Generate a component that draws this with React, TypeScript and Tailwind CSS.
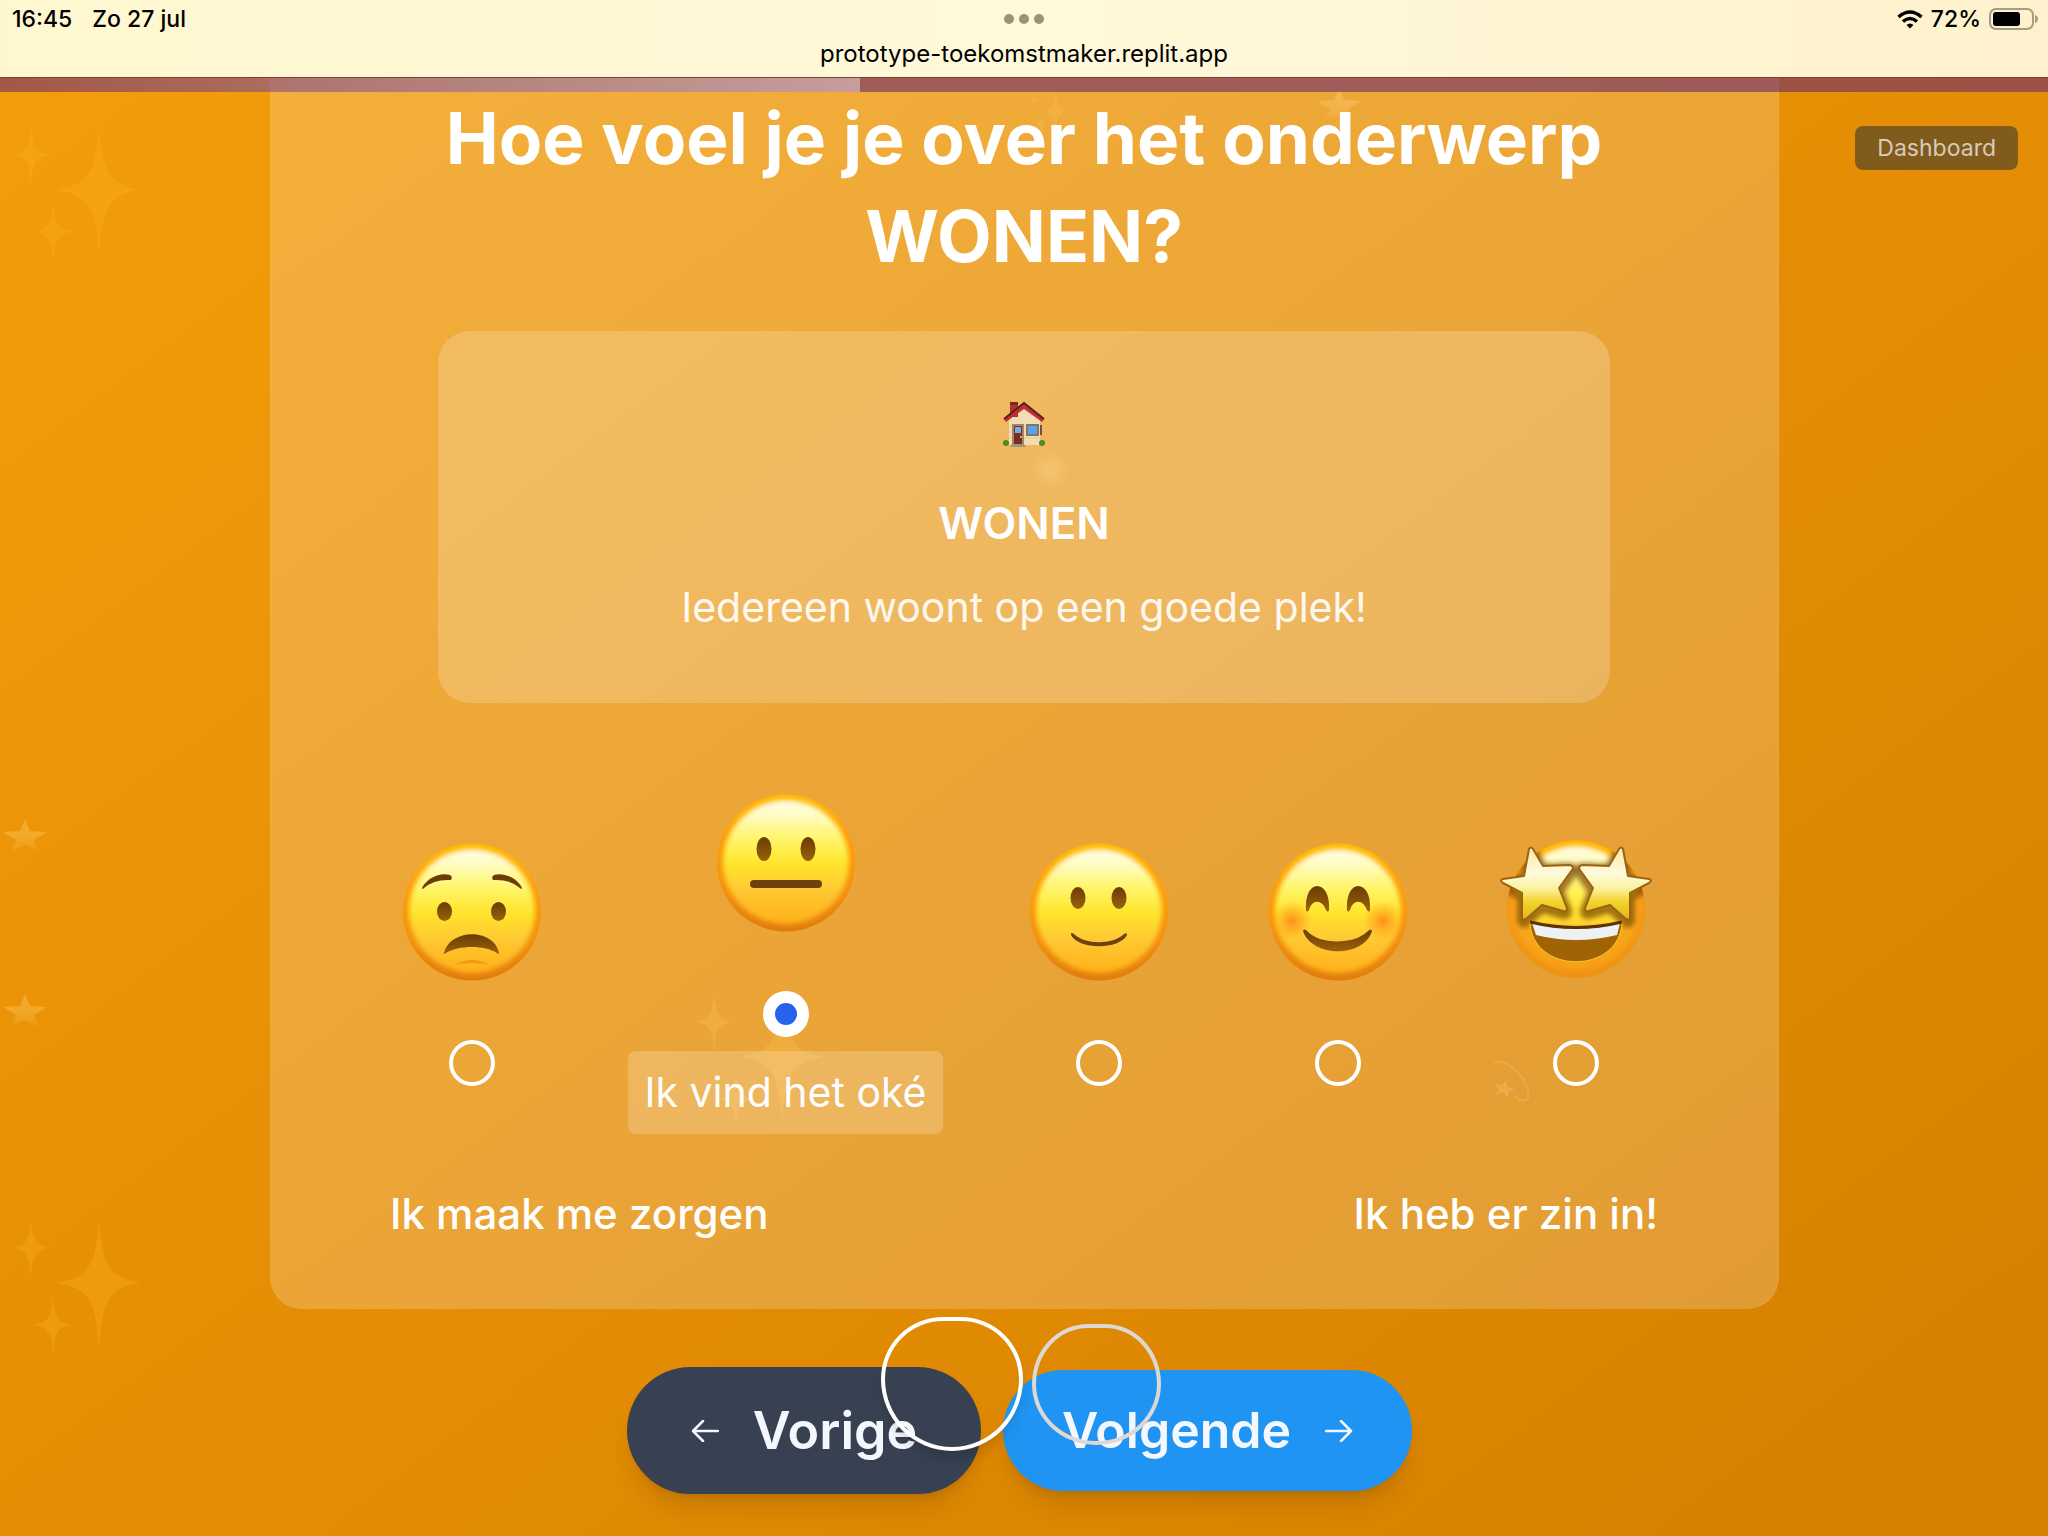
import React from "react";

const INK = "#70410a";

function FaceDefs() {
  return (
    <svg width="0" height="0" className="absolute" aria-hidden="true">
      <defs>
        <linearGradient id="face" x1="0" y1="0" x2="0" y2="1">
          <stop offset="0" stopColor="#fffde6" />
          <stop offset="0.12" stopColor="#fffcc4" />
          <stop offset="0.3" stopColor="#fff670" />
          <stop offset="0.5" stopColor="#ffe62f" />
          <stop offset="0.75" stopColor="#ffc630" />
          <stop offset="1" stopColor="#ffb11a" />
        </linearGradient>
        <linearGradient id="rim" x1="0" y1="0" x2="0" y2="1">
          <stop offset="0" stopColor="#ffb900" />
          <stop offset="0.3" stopColor="#ff9d05" />
          <stop offset="0.7" stopColor="#f4900f" />
          <stop offset="1" stopColor="#e07c0c" />
        </linearGradient>
        <filter id="soft" x="-10%" y="-10%" width="120%" height="120%">
          <feGaussianBlur stdDeviation="2.500" />
        </filter>
        <clipPath id="disc">
          <ellipse cx="82" cy="77" rx="69" ry="68.500" />
        </clipPath>
        <linearGradient id="ink" x1="0" y1="0" x2="0" y2="1">
          <stop offset="0" stopColor="#6b3c05" />
          <stop offset="1" stopColor="#9a620a" />
        </linearGradient>
        <radialGradient id="blush">
          <stop offset="0" stopColor="#ff8f1c" />
          <stop offset="1" stopColor="#ffa01c" stopOpacity="0" />
        </radialGradient>
        <linearGradient id="star" x1="0" y1="0" x2="0" y2="1">
          <stop offset="0" stopColor="#fde9a8" />
          <stop offset="0.35" stopColor="#fffadc" />
          <stop offset="0.55" stopColor="#fbf3a8" />
          <stop offset="0.75" stopColor="#f3d42c" />
          <stop offset="1" stopColor="#e6b41c" />
        </linearGradient>
      </defs>
    </svg>
  );
}

function Face({ label, children, cy = 80 }: { label: string; children: React.ReactNode; cy?: number }) {
  return (
    <svg viewBox="0 0 164 160" className="h-[160px] w-[164px]" role="img" aria-label={label}>
      <ellipse cx="82" cy={cy} rx="69" ry="68.500" fill="url(#rim)" />
      <ellipse cx="82" cy={cy - 1} rx="63" ry="62" fill="url(#face)" filter="url(#soft)" />
      {children}
    </svg>
  );
}

const Worried = () => (
  <Face label="Ik maak me zorgen">
    <ellipse cx="54.500" cy="79.500" rx="7.500" ry="9.500" fill="url(#ink)" />
    <ellipse cx="108.500" cy="79.500" rx="7.500" ry="9.500" fill="url(#ink)" />
    <path d="M32 56 C37 46 50 40 60 43 Q63 45 61 48 Q44 47 34 56 Q32 58 32 56Z" fill="#6b3c05" />
    <path d="M132 56 C127 46 114 40 104 43 Q101 45 103 48 Q120 47 130 56 Q132 58 132 56Z" fill="#6b3c05" />
    <path d="M54 121 C60 96 104 96 109 121 Q110 123 107 121 C95 113 69 113 56 121 Q53 123 54 121Z" fill="url(#ink)" />
    <path d="M64 133 Q82 123 100 133 Q82 129 64 133Z" fill="#f08c10" opacity="0.7" />
  </Face>
);

const Neutral = () => (
  <Face label="Ik vind het oké">
    <ellipse cx="60" cy="66" rx="7.500" ry="12" fill="url(#ink)" />
    <ellipse cx="104" cy="66" rx="7.500" ry="12" fill="url(#ink)" />
    <rect x="46" y="97" width="72" height="8" rx="4" fill={INK} />
  </Face>
);

const Smile = () => (
  <Face label="Best leuk">
    <ellipse cx="61" cy="66" rx="7.500" ry="11" fill="url(#ink)" />
    <ellipse cx="102" cy="66" rx="7.500" ry="11" fill="url(#ink)" />
    <path d="M54 102 Q54 100 57 102 C68 113 96 113 107 102 Q110 100 110 103 C102 118 62 118 54 103Z" fill={INK} />
  </Face>
);

const Blushing = () => (
  <Face label="Leuk">
    <circle cx="36" cy="89" r="20" fill="url(#blush)" />
    <circle cx="127" cy="89" r="20" fill="url(#blush)" />
    <path d="M50 78 C49 62 55 54 61 54 C68 54 74 62 73 78 Q72 81 70 78 C66 67 56 67 53 78 Q51 81 50 78Z" fill="url(#ink)" />
    <path d="M91 78 C90 62 96 54 102 54 C109 54 115 62 114 78 Q113 81 111 78 C107 67 97 67 94 78 Q92 81 91 78Z" fill="url(#ink)" />
    <path d="M47 99 Q48 96 51 99 C64 113 98 113 112 99 Q115 96 116 99 C108 126 56 126 47 99Z" fill="url(#ink)" />
  </Face>
);

const STAR =
  "M35 17 Q37 14 39 17 L49 34 L75 33 Q81 34 78 38 L65 56 L73 76 Q73 80 69 79 L48 73 L32 87 Q28 89 28 84 L28 61 L9 51 Q5 48 9 47 L30 44Z";

const StarStruck = () => (
  <Face label="Ik heb er zin in!" cy={77}>
    <g clipPath="url(#disc)">
      <path d="M0 62 H28 V92 Q82 100 136 92 V62 H164 V160 H0Z" fill="#f59a12" opacity="0.75" filter="url(#soft)" />
      <path d={STAR} fill="none" stroke="#7a4204" strokeWidth="10" strokeLinejoin="round" opacity="0.7" filter="url(#soft)" transform="translate(0 3)" />
      <path d={STAR} fill="none" stroke="#7a4204" strokeWidth="10" strokeLinejoin="round" opacity="0.7" filter="url(#soft)" transform="translate(164 3) scale(-1 1)" />
    </g>
    <path d="M36 90 Q82 101 128 90 C126 143 38 143 36 90Z" fill="#a06404" stroke="#ffc62b" strokeWidth="1" />
    <path d="M38 91 Q82 102 126 91 L123 103 Q82 113 42 103Z" fill="#eef0f4" />
    <path d="M36 90 Q82 101 128 90" fill="none" stroke="#5d3204" strokeWidth="3" />
    <g stroke="#9a6414" strokeWidth="2" strokeLinejoin="round">
      <path d={STAR} fill="url(#star)" />
      <path d={STAR} fill="url(#star)" transform="translate(164 0) scale(-1 1)" />
    </g>
  </Face>
);

function House() {
  return (
    <svg viewBox="0 0 44 46" className="h-[46px] w-[44px]" role="img" aria-label="Huis">
      <path d="M7 18 L22 7 L38 19 V44 H7Z" fill="#f1dfb4" />
      <path d="M7 25H38M7 31H38M7 37H38" stroke="#e2cc9b" strokeWidth="1" />
      <rect x="8" y="2" width="8" height="14" fill="#b5302a" />
      <rect x="8" y="1" width="8" height="3" fill="#7d2620" />
      <path d="M2 18 L22 2 L42 18 L40 21 L22 8 L4 21Z" fill="#c52f31" />
      <path d="M2 18 L22 2 L42 18" fill="none" stroke="#552020" strokeWidth="2" />
      <rect x="10" y="23" width="12" height="20" fill="#a78367" />
      <rect x="12" y="25" width="8" height="18" fill="#7a2d22" />
      <rect x="13" y="26" width="6" height="6" fill="#6cb3ea" />
      <circle cx="19" cy="36" r="1" fill="#f7d77a" />
      <rect x="24" y="23" width="13" height="12" fill="#85736c" />
      <rect x="26" y="25" width="9" height="8" fill="#5aa5e8" />
      <rect x="38" y="24" width="2" height="10" fill="#7c4a3a" />
      <path d="M10 43H22L24 46H8Z" fill="#a0957f" />
      <ellipse cx="4" cy="42" rx="3" ry="3" fill="#4d8c25" />
      <ellipse cx="40" cy="42" rx="3" ry="3" fill="#4d8c25" />
    </svg>
  );
}

const SPARK = "M0 -62 C4 -18 9 -6 42 0 C9 5 4 18 0 64 C-4 18 -9 5 -42 0 C-9 -6 -4 -18 0 -62Z";
const FIVE = "M0 -18 L5 -6 L22 -5 L9 3 L14 15 L0 8 L-14 15 L-9 3 L-22 -5 L-5 -6Z";

function Sparkles({ className }: { className: string }) {
  return (
    <svg viewBox="0 0 140 150" className={className} aria-hidden="true">
      <g fill="#ffb524">
        <path d={SPARK} transform="translate(88 75)" />
        <path d={SPARK} transform="translate(20 40) scale(.45)" />
        <path d={SPARK} transform="translate(42 117) scale(.45)" />
      </g>
    </svg>
  );
}

function SmallStar({ className }: { className: string }) {
  return (
    <svg viewBox="-24 -20 48 40" className={className} aria-hidden="true">
      <defs>
        <linearGradient id="fade" x1="0" y1="0" x2="0" y2="1">
          <stop offset="0.5" stopColor="#ffc860" />
          <stop offset="1" stopColor="#ffc860" stopOpacity="0.2" />
        </linearGradient>
      </defs>
      <path d={FIVE} fill="url(#fade)" />
    </svg>
  );
}

function Decorations() {
  return (
    <div className="pointer-events-none absolute inset-0 overflow-hidden">
      <Sparkles className="absolute left-[11px] top-[115px] w-[140px] opacity-30" />
      <Sparkles className="absolute left-[11px] top-[1208px] w-[140px] opacity-30" />
      <SmallStar className="absolute left-[1px] top-[817px] w-[48px] opacity-40" />
      <SmallStar className="absolute left-[1px] top-[992px] w-[48px] opacity-40" />
      <SmallStar className="absolute left-[1315px] top-[86px] w-[48px] opacity-30" />
      <Sparkles className="absolute left-[1028px] top-[88px] w-[44px] opacity-30" />
      <Sparkles className="absolute left-[694px] top-[982px] w-[140px] opacity-30" />
      <div className="absolute left-[1030px] top-[450px] size-[40px] rounded-full bg-[radial-gradient(circle,#ffd980,transparent_70%)] opacity-25" />
      <svg viewBox="0 0 44 46" className="absolute left-[1490px] top-[1058px] w-[44px] opacity-20" aria-hidden="true">
        <path d="M4 4 C22 0 42 28 38 40 Q34 46 24 38" fill="none" stroke="#ffd060" strokeWidth="2" />
        <path d={FIVE} fill="#ffe0a0" transform="translate(14 31) rotate(15) scale(.5)" />
      </svg>
    </div>
  );
}

function StatusBar() {
  return (
    <header className="relative z-10 flex h-[78px] flex-col border-b border-[#80402f] bg-linear-to-r from-[#fff7cf] via-[#fff9da] to-[#fff1cd] text-black">
      <div className="grid h-[38px] grid-cols-3 items-center px-3 text-[23px] font-medium">
        <div className="flex gap-5">
          <span>16:45</span>
          <span>Zo 27 jul</span>
        </div>
        <div className="flex justify-center gap-[5px]">
          <span className="size-[10px] rounded-full bg-[#999573]" />
          <span className="size-[10px] rounded-full bg-[#999573]" />
          <span className="size-[10px] rounded-full bg-[#999573]" />
        </div>
        <div className="-mr-3 flex items-center justify-end gap-2 pr-[9px] text-[23px]">
          <svg viewBox="0 0 26 19" className="h-[19px] w-[26px]" aria-hidden="true">
            <g fill="none" stroke="#000" strokeWidth="3.600">
              <path d="M1.500 7 Q13 -3 24.500 7" />
              <path d="M6 11.500 Q13 5.500 20 11.500" />
            </g>
            <path d="M9.500 15 Q13 12 16.500 15 L13 18.500Z" />
          </svg>
          <span>72%</span>
          <svg viewBox="0 0 50 22" className="h-[22px] w-[50px]" aria-hidden="true">
            <rect x="1" y="1" width="43" height="20" rx="6" fill="none" stroke="#a29e84" strokeWidth="2" />
            <rect x="4" y="4" width="27" height="14" rx="3" />
            <path d="M46 7 Q49 8 49 11 Q49 14 46 15Z" fill="#a29e84" />
          </svg>
        </div>
      </div>
      <p className="text-center text-[24px] leading-8">prototype-toekomstmaker.replit.app</p>
    </header>
  );
}

const OPTIONS = [
  { id: "zorgen", Icon: Worried },
  { id: "oke", Icon: Neutral, text: "Ik vind het oké" },
  { id: "best", Icon: Smile },
  { id: "leuk", Icon: Blushing },
  { id: "zin", Icon: StarStruck },
];

export default function App() {
  const [picked, setPicked] = React.useState("oke");
  return (
    <div className="relative min-h-screen overflow-hidden bg-linear-to-br from-[#f59e0b] to-[#d67f00] font-['Inter',sans-serif] text-white">
      <FaceDefs />
      <Decorations />
      <StatusBar />
      <div className="relative z-10 h-[14px] bg-[#6b2a6e]/60" role="progressbar" aria-valuenow={42} aria-label="Voortgang">
        <div className="h-full w-[42%] bg-linear-to-r from-white/0 to-white/40" />
      </div>
      <button className="absolute right-[30px] top-[126px] z-10 h-[44px] rounded-lg bg-[#815b1c] px-[22px] text-[23px] text-white/70">Dashboard</button>

      <main className="relative mx-auto -mt-[14px] flex w-[1509px] max-w-full flex-col items-center rounded-b-[32px] border border-t-0 border-white/5 bg-white/20 pb-[62px] pt-[11px]">
        <h1 className="max-w-[1200px] text-center text-[71px] font-bold leading-[98px]">Hoe voel je je over het onderwerp WONEN?</h1>
        <section className="mt-[46px] flex w-[1172px] max-w-full flex-col items-center rounded-[32px] bg-white/20 pb-[64px] pt-[70px]">
          <House />
          <h2 className="mt-[44px] text-[44px] font-semibold leading-[64px]">WONEN</h2>
          <p className="mt-5 text-[41px] leading-[64px] text-white/90">Iedereen woont op een goede plek!</p>
        </section>

        <div className="mt-20 flex w-[1268px] max-w-full items-center justify-between">
          {OPTIONS.map(({ id, Icon, text }) => (
            <label key={id} className="flex flex-col items-center">
              <Icon />
              <input
                type="radio"
                name="gevoel"
                checked={picked === id}
                onChange={() => setPicked(id)}
                className="mt-12 size-[46px] appearance-none rounded-full border-4 border-white checked:border-[12px] checked:bg-[#2563eb]"
              />
              {picked === id && text && (
                <span className="mt-[14px] rounded-lg bg-white/20 px-4 text-[41px] leading-[83px]">{text}</span>
              )}
            </label>
          ))}
        </div>
        <div className="mt-12 flex w-[1268px] max-w-full justify-between text-[42px] font-medium leading-[64px]">
          <span>Ik maak me zorgen</span>
          <span>Ik heb er zin in!</span>
        </div>
      </main>

      <nav className="relative mt-[58px] flex items-center justify-center gap-[22px] pr-[9px]">
        <button className="flex h-[127px] w-[354px] items-center justify-center gap-[34px] rounded-full bg-[#374151] text-[52px] font-semibold text-[#f5f7ff] shadow-xl">
          <svg viewBox="0 0 28 22" className="h-[22px] w-[28px]" fill="none" stroke="currentColor" strokeWidth="2.500" strokeLinecap="round" strokeLinejoin="round" aria-hidden="true">
            <path d="M12 1 L2 11 L12 21 M2 11 H27" />
          </svg>
          Vorige
        </button>
        <button className="flex h-[121px] w-[409px] items-center justify-center gap-[34px] rounded-full bg-[#2094f3] text-[50px] font-semibold text-[#f5f7ff] shadow-xl">
          Volgende
          <svg viewBox="0 0 28 22" className="h-[22px] w-[28px]" fill="none" stroke="currentColor" strokeWidth="2.500" strokeLinecap="round" strokeLinejoin="round" aria-hidden="true">
            <path d="M16 1 L26 11 L16 21 M26 11 H1" />
          </svg>
        </button>
        <span className="pointer-events-none absolute -top-[50px] left-[881px] h-[134px] w-[142px] rounded-[62px_62px_71px_71px/62px_62px_72px_72px] border-4 border-white shadow-[0_10px_15px_-6px_rgba(0,0,0,0.2)]" />
        <span className="pointer-events-none absolute -top-[43px] left-[1032px] h-[121px] w-[129px] rounded-[56px_56px_64px_64px/60px_60px_61px_61px] border-4 border-[#dcd8d4]" />
      </nav>
    </div>
  );
}
